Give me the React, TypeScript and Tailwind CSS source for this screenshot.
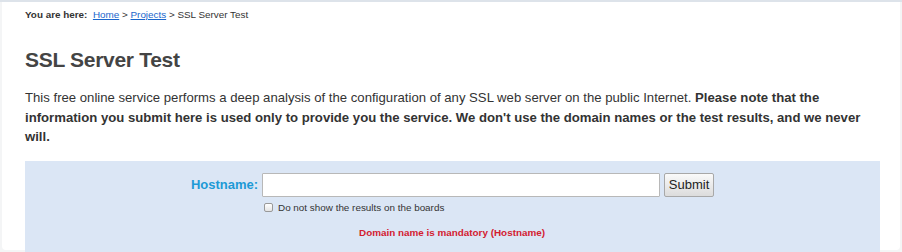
import React from "react";

export default function App() {
  return (
    <div className="w-[902px] h-[252px] bg-[#f4f5f6] pt-[2px] px-[2px] overflow-hidden" style={{ fontFamily: '"Liberation Sans", Arial, sans-serif' }}>
      <div className="border-t-2 border-[#dde3ea] -mx-[2px] -mt-[2px]" />
      <div className="bg-white h-[248px] rounded-b-[4px] pl-[23px] pr-[20px]">
        <div className="pt-[6px] text-[9.9px] leading-[14px] text-[#333]">
          <b>You are here:</b>&nbsp; <a href="#" className="text-[#1a66cc] underline">Home</a> &gt;{" "}
          <a href="#" className="text-[#1a66cc] underline">Projects</a> &gt; SSL Server Test
        </div>
        <h1 className="mt-[25px] text-[21px] leading-[26px] font-bold text-[#444] tracking-[-0.3px]">SSL Server Test</h1>
        <p className="mt-[15px] text-[13.15px] leading-[19.5px] text-[#333]">
          This free online service performs a deep analysis of the configuration of any SSL web server on the public Internet.{" "}
          <b>Please note that the information you submit here is used only to provide you the service. We don't use the domain names or the test results, and we never will.</b>
        </p>
        <div className="mt-[14px] bg-[#dbe6f5] h-[92px] pt-[12px]">
          <div className="flex items-center justify-center gap-[4px]">
            <label className="text-[13px] font-bold text-[#1d9ad6]">Hostname:</label>
            <input className="w-[398px] h-[24px] bg-white border border-[#b8b8b8] rounded-[1px]" />
            <button className="h-[24px] w-[50px] text-[13px] text-[#222] bg-gradient-to-b from-[#fafafa] to-[#dcdcdc] border border-[#a8a8a8] rounded-[2px]">Submit</button>
          </div>
          <div className="flex items-center ml-[239px] mt-[4px] gap-[5px]">
            <span className="w-[9px] h-[9px] border border-[#999] rounded-[2px] bg-gradient-to-b from-white to-[#e4e4e4]" />
            <span className="text-[9.9px] text-[#333]">Do not show the results on the boards</span>
          </div>
          <div className="mt-[11px] pl-[334px] text-[9.9px] font-bold text-[#d32030]">Domain name is mandatory (Hostname)</div>
        </div>
      </div>
    </div>
  );
}
